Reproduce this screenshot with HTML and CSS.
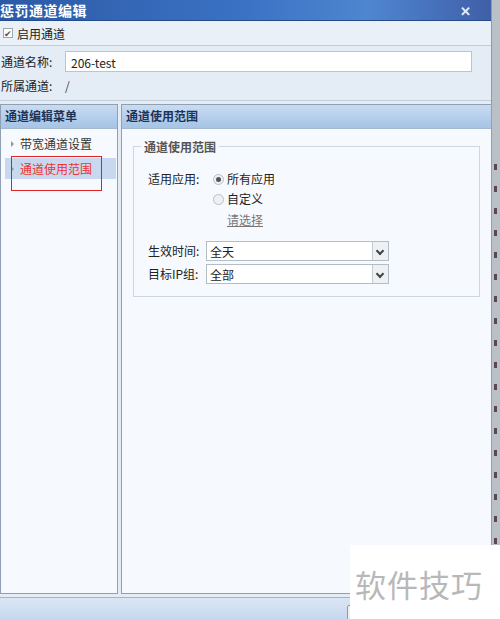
FILE: index.html
```html
<!DOCTYPE html>
<html lang="zh-CN">
<head>
  <meta charset="UTF-8">
  <title>惩罚通道编辑</title>
  <link rel="stylesheet" href="styles.css">
</head>
<body>
  <div class="page">
    <div class="dialog">

      <!-- 标题栏 -->
      <div class="titlebar">
        <span class="title">惩罚通道编辑</span>
        <span class="close">✕</span>
      </div>

      <!-- 基本信息 -->
      <div class="row row-enable">
        <span class="check">✔</span>
        <span>启用通道</span>
      </div>
      <div class="info">
        <div class="row row-name">
          <span class="label">通道名称:</span>
          <div class="input">206-test</div>
        </div>
        <div class="row row-owner">
          <span class="label">所属通道:</span>
          <span class="slash">/</span>
        </div>
      </div>

      <!-- 面板 -->
      <div class="panels">
        <div class="panel side">
          <div class="panel-head">通道编辑菜单</div>
          <ul class="menu">
            <li class="menu-item">带宽通道设置</li>
            <li class="menu-item active">通道使用范围</li>
          </ul>
          <div class="mark"></div>
        </div>

        <div class="panel main">
          <div class="panel-head">通道使用范围</div>
          <div class="panel-body">
            <fieldset class="group">
              <legend>通道使用范围</legend>
              <div class="field">
                <span class="flabel">适用应用:</span>
                <div class="radios">
                  <div class="radio on">所有应用</div>
                  <div class="radio">自定义</div>
                  <a class="pick">请选择</a>
                </div>
              </div>
              <div class="field sel-field">
                <span class="flabel">生效时间:</span>
                <div class="select"><span>全天</span><i class="arrow"></i></div>
              </div>
              <div class="field sel-field">
                <span class="flabel">目标IP组:</span>
                <div class="select"><span>全部</span><i class="arrow"></i></div>
              </div>
            </fieldset>
          </div>
        </div>
      </div>

      <div class="footer"><span class="btn"></span></div>
    </div>

    <div class="backdrop"></div>
  </div>

  <div class="watermark">软件技巧</div>
</body>
</html>
```

FILE: styles.css
```css
* {
  margin: 0;
  padding: 0;
  box-sizing: border-box;
}
html, body {
  height: 100%;
  overflow: hidden;
  font-family: "Noto Sans CJK SC", "Liberation Sans", sans-serif;
  font-size: 12px;
  color: #222;
  background: #dfe7f1;
}

.page {
  display: flex;
  height: 619px;
}

.dialog {
  width: 492px;
  display: flex;
  flex-direction: column;
  background: #e4ecf6;
  border-right: 1px solid #8e9aa8;
}

.backdrop {
  flex: 1;
  background:
    repeating-linear-gradient(180deg, transparent 0 14px, #5a4a4c 14px 20px, transparent 20px 22px) 2px 150px / 3px 100% no-repeat,
    #b9c0c8;
}

/* 标题栏 */
.titlebar {
  height: 21px;
  display: flex;
  justify-content: space-between;
  align-items: center;
  padding: 0 20px 0 0;
  background: linear-gradient(90deg, #2c5aa6 0%, #3b72c4 50%, #4f86d0 75%, #3f5fa8 100%);
  border-bottom: 1px solid #234a8a;
  color: #fff;
}
.title {
  font-size: 14px;
  font-weight: bold;
  letter-spacing: 0.5px;
}
.close {
  font-size: 13px;
  font-weight: bold;
  color: #e6edf7;
}

.row {
  display: flex;
  align-items: center;
}
.row-enable {
  height: 25px;
  padding-left: 3px;
  gap: 4px;
  background: #eaf0f8;
  border-bottom: 1px solid #c3cdd8;
}
.check {
  width: 10px;
  height: 10px;
  font-size: 9px;
  line-height: 10px;
  color: #555;
  background: #fff;
  border: 1px solid #9aa;
}

.info {
  padding: 5px 0 0 1px;
  border-bottom: 1px solid #c3cdd8;
  height: 55px;
}
.label {
  width: 64px;
}
.input {
  width: 407px;
  height: 21px;
  padding: 2px 5px;
  background: #fff;
  border: 1px solid #bcc4cc;
  font-size: 12px;
}
.row-owner {
  margin-top: 2px;
  height: 22px;
}
.slash {
  color: #444;
}

/* 面板 */
.panels {
  flex: 1;
  display: flex;
  gap: 3px;
  margin-top: 3px;
  padding-bottom: 3px;
  border-bottom: 1px solid #a9b4c0;
}
.panel {
  background: #f6f9fd;
  border: 1px solid #8fa0b4;
  position: relative;
}
.side {
  width: 118px;
}
.main {
  flex: 1;
  margin-right: -1px;
}
.panel-head {
  height: 24px;
  line-height: 22px;
  padding-left: 4px;
  font-weight: bold;
  color: #1d3357;
  background: linear-gradient(180deg, #c9dbf1 0%, #b3cdea 60%, #a6c4e6 100%);
  border-bottom: 1px solid #a4b8d0;
}

.menu {
  list-style: none;
  padding: 4px 0 0 4px;
}
.menu-item {
  height: 22px;
  line-height: 22px;
  padding-left: 15px;
  margin-right: 1px;
  color: #333;
  position: relative;
}
.menu-item::before {
  content: "";
  position: absolute;
  left: 6px;
  top: 8px;
  border: 3px solid transparent;
  border-left: 3px solid #999;
  border-right: 0;
}
.menu-item.active {
  margin-top: 3px;
  height: 21px;
  background: #c8d8ef;
  color: #e33;
}
.mark {
  position: absolute;
  left: 10px;
  top: 51px;
  width: 91px;
  height: 35px;
  border: 1px solid #d22;
}

.panel-body {
  padding: 9px 11px 0 11px;
}
.group {
  border: 1px solid #cfd6de;
  padding: 8px 0 12px 14px;
  height: 159px;
}
legend {
  padding: 0 3px;
  margin-left: -7px;
  font-weight: bold;
  color: #555;
}
.field {
  display: flex;
  margin-top: 4px;
}
.field:first-of-type {
  margin-top: 6px;
}
.flabel {
  width: 58px;
  line-height: 19px;
}
.radios {
  display: flex;
  flex-direction: column;
  margin-left: 7px;
}
.radio {
  height: 20px;
  line-height: 20px;
  padding-left: 14px;
  position: relative;
}
.radio::before {
  content: "";
  position: absolute;
  left: 0;
  top: 5px;
  width: 9px;
  height: 9px;
  border-radius: 50%;
  border: 1px solid #b8c0c8;
  background: #eef0f3;
}
.radio.on::after {
  content: "";
  position: absolute;
  left: 3px;
  top: 8px;
  width: 5px;
  height: 5px;
  border-radius: 50%;
  background: #555;
}
.pick {
  margin: 2px 0 0 14px;
  color: #777;
  text-decoration: underline;
}

.sel-field {
  margin-top: 3px;
}
.field:nth-child(3) {
  margin-top: 13px;
}
.select {
  width: 183px;
  height: 20px;
  display: flex;
  justify-content: space-between;
  align-items: center;
  background: #fff;
  border: 1px solid #b4bcc6;
  padding-left: 3px;
}
.arrow {
  width: 16px;
  height: 18px;
  border-left: 1px solid #c6ccd4;
  background: #eef1f4;
  position: relative;
}
.arrow::after {
  content: "";
  position: absolute;
  left: 4px;
  top: 6px;
  width: 4px;
  height: 4px;
  border-right: 2px solid #444;
  border-bottom: 2px solid #444;
  transform: rotate(45deg);
}

.footer {
  height: 21px;
  background: linear-gradient(180deg, #dbe6f4, #c6d8ef);
  position: relative;
}
.btn {
  position: absolute;
  left: 347px;
  top: 7px;
  width: 60px;
  height: 20px;
  border: 1px solid #999;
  border-radius: 2px;
  background: #eee;
}

.watermark {
  position: absolute;
  left: 350px;
  top: 545px;
  width: 150px;
  height: 74px;
  padding: 16px 0 0 5px;
  background: #fff;
  color: #b8b8b8;
  font-size: 31px;
  letter-spacing: 1px;
}
```
